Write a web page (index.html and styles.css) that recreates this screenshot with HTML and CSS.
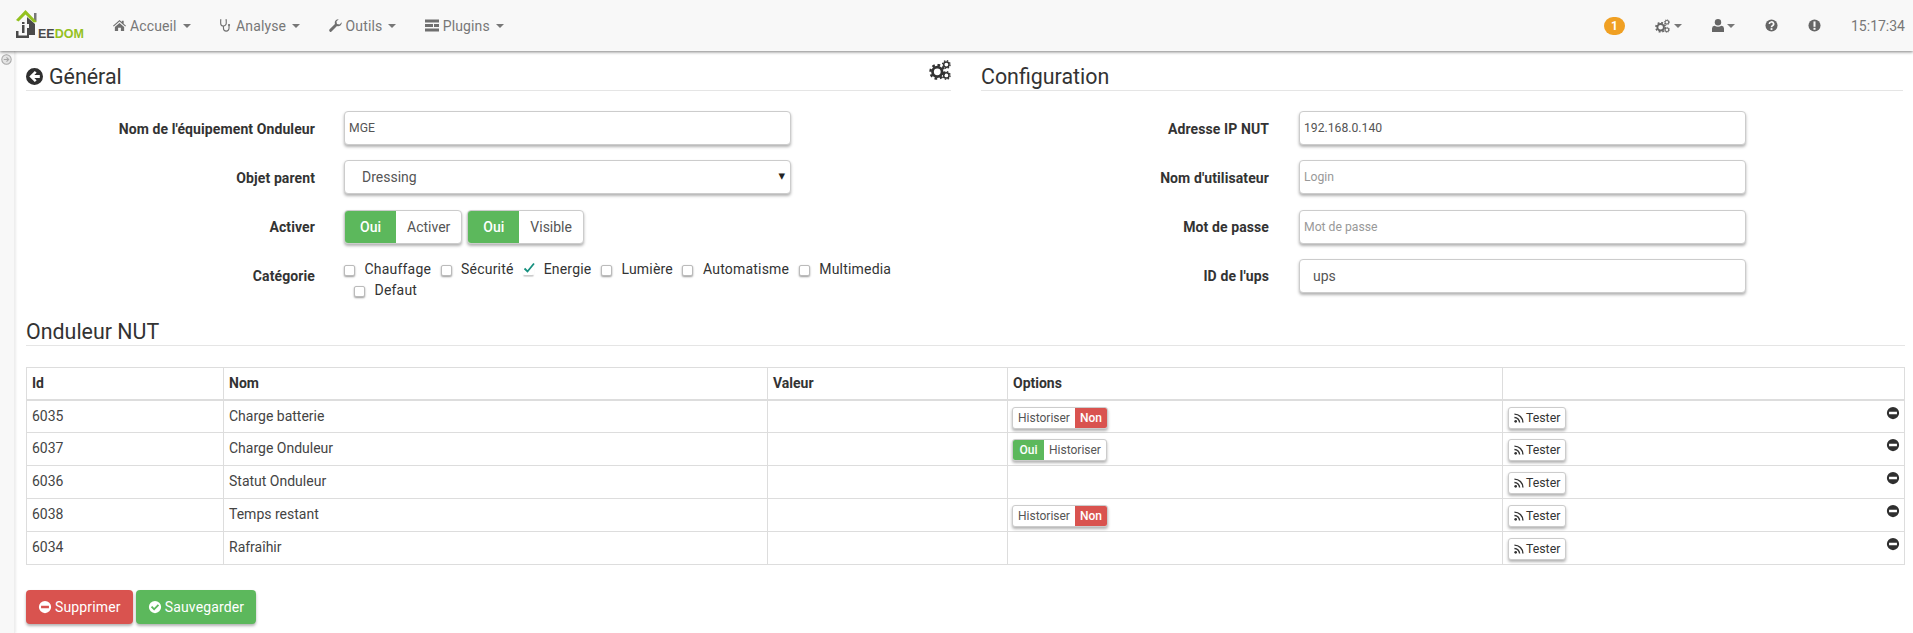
FILE: index.html
```html
<!DOCTYPE html>
<html lang="fr">
<head>
<meta charset="utf-8">
<title>Jeedom</title>
<link rel="stylesheet" href="styles.css">
</head>
<body>
<svg class="defs" width="0" height="0" aria-hidden="true">
  <defs>
    <symbol id="gear" viewBox="0 0 24 24"><circle cx="12" cy="12" r="7" fill="none" stroke="currentColor" stroke-width="4"/><circle cx="12" cy="12" r="10" fill="none" stroke="currentColor" stroke-width="3.600" stroke-dasharray="3.900 3.954"/></symbol>
    <symbol id="cogs" viewBox="0 0 24 22"><use href="#gear" x="0" y="4" width="18" height="18"/><use href="#gear" x="14" y="0" width="10" height="10"/><use href="#gear" x="14" y="12" width="10" height="10"/></symbol>
    <symbol id="minus" viewBox="0 0 16 16"><path fill="currentColor" fill-rule="evenodd" d="M8 1a7 7 0 1 0 0 14A7 7 0 0 0 8 1zM3.500 6.500h9v3h-9z"/></symbol>
    <symbol id="rss" viewBox="0 0 12 12"><circle cx="2" cy="10" r="1.600" fill="currentColor"/><path fill="none" stroke="currentColor" stroke-width="1.700" d="M.5 5.300a6.200 6.200 0 0 1 6.200 6.200M.5 1.300a10.200 10.200 0 0 1 10.200 10.200"/></symbol>
    <symbol id="caret" viewBox="0 0 8 4"><path fill="currentColor" d="M0 0h8L4 4z"/></symbol>
  </defs>
</svg>

<header class="navbar">
  <a class="brand" href="#">
    <svg class="brand-mark" viewBox="0 0 26 33" width="26" height="33" aria-hidden="true">
      <rect x="20" y="5" width="2.500" height="8" fill="#777"/>
      <path fill="#4a4a4a" d="M13 9l8 7v11h-6V16h-2zM8 14h2.500v2H8zM8 17h2.500v8H8zM2 23h2.500v4.500h8.500V20h2v10H2z"/>
      <path fill="#94c11f" d="M11.500 2L23 14l-3.500.5-8-8-7 7-2.500-1.500z"/>
    </svg>
    <span class="brand-ee">EE</span><span class="brand-dom">DOM</span>
  </a>
  <nav class="nav-main">
    <a class="nav-item" href="#">
      <svg class="ico" viewBox="0 0 14 12" aria-hidden="true"><path fill="currentColor" d="M7 0l2.500 2.200V1h2v3l2.500 2.300-.8.8L7 1.800 .8 7.100 0 6.300zM2 7.500L7 3.200l5 4.300V12H8.500V8.500h-3V12H2z"/></svg>
      Accueil <svg class="caret"><use href="#caret"/></svg></a>
    <a class="nav-item" href="#">
      <svg class="ico" viewBox="0 0 12 14" aria-hidden="true"><path fill="none" stroke="currentColor" stroke-width="1.200" d="M1.500 1H.8v3.500a3 3 0 0 0 6 0V1h-.8M3.800 7.500v2.500a3 3 0 0 0 6 0V7.500"/><circle cx="9.800" cy="6.500" r="1.200" fill="currentColor"/></svg>
      Analyse <svg class="caret"><use href="#caret"/></svg></a>
    <a class="nav-item" href="#">
      <svg class="ico" viewBox="0 0 14 14" aria-hidden="true"><path fill="currentColor" d="M13.800 3.500a4 4 0 0 1-5.200 4.100L3 13.300a1.500 1.500 0 0 1-2.300-2.200L6.400 5.400A4 4 0 0 1 10.500.2L8 2.700l.6 2.700 2.700.6z"/></svg>
      Outils <svg class="caret"><use href="#caret"/></svg></a>
    <a class="nav-item" href="#">
      <svg class="ico ico-wide" viewBox="0 0 14 12" aria-hidden="true"><path fill="currentColor" d="M0 0h14v3H0zM0 4.500h8v3H0zM9 4.500h5v3H9zM0 9h14v3H0z"/></svg>
      Plugins <svg class="caret"><use href="#caret"/></svg></a>
  </nav>
  <div class="nav-right">
    <span class="badge">1</span>
    <span class="nav-icon nav-cogs"><svg class="ico-cogs"><use href="#cogs"/></svg><svg class="caret"><use href="#caret"/></svg></span>
    <span class="nav-icon nav-user">
      <svg class="ico-user" viewBox="0 0 12 13" aria-hidden="true"><circle cx="6" cy="3.300" r="3.200" fill="currentColor"/><path fill="currentColor" d="M0 13V9.500Q0 7 2.500 6.800q3.500 2 7 0Q12 7 12 9.500V13z"/></svg>
      <svg class="caret"><use href="#caret"/></svg></span>
    <span class="nav-icon nav-help"><svg class="ico-round" viewBox="0 0 14 14" aria-hidden="true"><circle cx="7" cy="7" r="6.500" fill="currentColor"/><path fill="none" stroke="#f8f8f8" stroke-width="1.800" d="M4.700 5.400A2.300 2.100 0 1 1 8 7.200Q7 7.700 7 8.800"/><rect x="6" y="9.800" width="2" height="2" fill="#f8f8f8"/></svg></span>
    <span class="nav-icon nav-alert"><svg class="ico-round" viewBox="0 0 14 14" aria-hidden="true"><circle cx="7" cy="7" r="6.500" fill="currentColor"/><rect x="5.900" y="2.600" width="2.200" height="5.800" fill="#f8f8f8"/><rect x="5.900" y="9.500" width="2.200" height="2.100" fill="#f8f8f8"/></svg></span>
    <span class="clock">15:17:34</span>
  </div>
</header>

<div class="layout">
  <aside class="rail">
    <svg class="rail-ico" viewBox="0 0 14 14" aria-hidden="true"><circle cx="7" cy="7" r="6" fill="#e4e4e4" stroke="#a8a8a8" stroke-width="1.300"/><path fill="none" stroke="#a8a8a8" stroke-width="1.400" d="M3.500 7h6M7 4.300L9.800 7 7 9.700"/></svg>
  </aside>
  <main class="content">
    <div class="columns">
      <section class="col col-left">
        <h2 class="legend">
          <svg class="back" viewBox="0 0 16 16" aria-hidden="true"><path fill="#2f2f2f" fill-rule="evenodd" d="M8 0a8 8 0 1 0 0 16A8 8 0 0 0 8 0zM8.300 2.800l1.700 1.700-2.200 2.100h5.200v2.800H7.800L10 11.500l-1.700 1.700L3.100 8z"/></svg>
          Général
          <svg class="legend-cogs"><use href="#cogs"/></svg>
        </h2>
        <div class="form">
          <div class="row">
            <label class="lbl">Nom de l'équipement Onduleur</label>
            <input class="field field-small" type="text" value="MGE">
          </div>
          <div class="row">
            <label class="lbl">Objet parent</label>
            <div class="select">Dressing<span class="select-arrow">▾</span></div>
          </div>
          <div class="row">
            <label class="lbl">Activer</label>
            <div class="toggles">
              <span class="tg"><b class="tg-oui">Oui</b><span class="tg-txt">Activer</span></span>
              <span class="tg"><b class="tg-oui">Oui</b><span class="tg-txt">Visible</span></span>
            </div>
          </div>
          <div class="row row-cat">
            <label class="lbl">Catégorie</label>
            <div class="cats">
              <span class="cat"><i class="box"></i>Chauffage</span>
              <span class="cat"><i class="box"></i>Sécurité</span>
              <span class="cat"><i class="box box-on"><svg viewBox="0 0 12 12" aria-hidden="true"><path fill="none" stroke="#16907f" stroke-width="1.800" d="M1.500 6.500l3 3L11 1.500"/></svg></i>Energie</span>
              <span class="cat"><i class="box"></i>Lumière</span>
              <span class="cat"><i class="box"></i>Automatisme</span>
              <span class="cat"><i class="box"></i>Multimedia</span>
              <span class="cat cat-second"><i class="box"></i>Defaut</span>
            </div>
          </div>
        </div>
      </section>
      <section class="col col-right">
        <h2 class="legend">Configuration</h2>
        <div class="form">
          <div class="row">
            <label class="lbl">Adresse IP NUT</label>
            <input class="field field-small" type="text" value="192.168.0.140">
          </div>
          <div class="row">
            <label class="lbl">Nom d'utilisateur</label>
            <input class="field field-small" type="text" placeholder="Login">
          </div>
          <div class="row">
            <label class="lbl">Mot de passe</label>
            <input class="field field-small" type="text" placeholder="Mot de passe">
          </div>
          <div class="row">
            <label class="lbl">ID de l'ups</label>
            <input class="field field-ups" type="text" value="ups">
          </div>
        </div>
      </section>
    </div>

    <h2 class="legend legend-table">Onduleur NUT</h2>
    <table class="cmds">
      <colgroup><col class="c1"><col class="c2"><col class="c3"><col class="c4"><col></colgroup>
      <thead>
        <tr><th>Id</th><th>Nom</th><th>Valeur</th><th>Options</th><th></th></tr>
      </thead>
      <tbody>
        <tr><td>6035</td><td>Charge batterie</td><td></td>
          <td><span class="mini"><span class="mini-txt">Historiser</span><b class="mini-non">Non</b></span></td>
          <td class="act"><span class="test"><svg class="rss"><use href="#rss"/></svg>Tester</span><svg class="rm"><use href="#minus"/></svg></td></tr>
        <tr><td>6037</td><td>Charge Onduleur</td><td></td>
          <td><span class="mini"><b class="mini-oui">Oui</b><span class="mini-txt">Historiser</span></span></td>
          <td class="act"><span class="test"><svg class="rss"><use href="#rss"/></svg>Tester</span><svg class="rm"><use href="#minus"/></svg></td></tr>
        <tr><td>6036</td><td>Statut Onduleur</td><td></td>
          <td></td>
          <td class="act"><span class="test"><svg class="rss"><use href="#rss"/></svg>Tester</span><svg class="rm"><use href="#minus"/></svg></td></tr>
        <tr><td>6038</td><td>Temps restant</td><td></td>
          <td><span class="mini"><span class="mini-txt">Historiser</span><b class="mini-non">Non</b></span></td>
          <td class="act"><span class="test"><svg class="rss"><use href="#rss"/></svg>Tester</span><svg class="rm"><use href="#minus"/></svg></td></tr>
        <tr><td>6034</td><td>Rafraîhir</td><td></td>
          <td></td>
          <td class="act"><span class="test"><svg class="rss"><use href="#rss"/></svg>Tester</span><svg class="rm"><use href="#minus"/></svg></td></tr>
      </tbody>
    </table>

    <div class="actions">
      <button class="btn btn-red" type="button"><svg class="btn-ico" viewBox="0 0 16 16" aria-hidden="true"><path fill="#fff" fill-rule="evenodd" d="M8 1a7 7 0 1 0 0 14A7 7 0 0 0 8 1zM3.500 6.500h9v3h-9z"/></svg>Supprimer</button>
      <button class="btn btn-green" type="button"><svg class="btn-ico" viewBox="0 0 16 16" aria-hidden="true"><path fill="#fff" fill-rule="evenodd" d="M8 1a7 7 0 1 0 0 14A7 7 0 0 0 8 1zM7 12L3.300 8.300l1.500-1.500L7 9l4.200-4.200 1.500 1.500z"/></svg>Sauvegarder</button>
    </div>
  </main>
</div>
</body>
</html>
```
FILE: styles.css
```css
* { box-sizing: border-box; }
html, body { margin: 0; padding: 0; }
body {
  font-family: Roboto, "Liberation Sans", sans-serif;
  font-size: 14px;
  line-height: 20px;
  color: #333;
  background: #fff;
  height: 633px;
  overflow: hidden;
}
.defs { position: absolute; }

/* navbar */
.navbar {
  display: flex;
  align-items: center;
  height: 51px;
  background: #f8f8f8;
  box-shadow: 0 1px 3px rgba(0, 0, 0, .5);
  position: relative;
  z-index: 2;
}
.brand {
  display: flex;
  align-items: flex-end;
  align-self: flex-start;
  flex: none;
  width: 97px;
  height: 33px;
  margin-top: 8px;
  padding-left: 14px;
  font-family: "Liberation Sans", sans-serif;
  font-weight: 700;
  font-size: 12.500px;
  line-height: 15px;
  text-decoration: none;
}
.brand-mark { flex: none; margin-right: -2px; }
.brand-ee { color: #4a4a4a; margin-bottom: -1px; }
.brand-dom { color: #94c11f; margin-bottom: -1px; }
.nav-main { display: flex; margin-left: 16px; }
.nav-item {
  display: flex;
  align-items: center;
  gap: 4px;
  color: #777;
  letter-spacing: .12px;
  text-decoration: none;
  height: 50px;
  margin-right: 28.500px;
  white-space: nowrap;
}
.ico { width: 13px; height: 13px; color: #6f6f6f; flex: none; }
.ico-wide { width: 14px; }
.caret { width: 8px; height: 4px; color: #777; flex: none; margin-left: 2px; }
.nav-right {
  margin-left: auto;
  display: flex;
  align-items: center;
  color: #666;
  padding-right: 8px;
}
.badge {
  width: 21px;
  height: 18px;
  border-radius: 9px;
  background: #f0a023;
  color: #fff;
  font-size: 12px;
  font-weight: 700;
  line-height: 18px;
  text-align: center;
  margin-right: 30px;
}
.nav-icon { display: flex; align-items: center; color: #666; }
.nav-icon .caret { margin-left: 4px; }
.nav-cogs { margin-right: 30px; }
.ico-cogs { width: 15px; height: 14px; }
.nav-user { margin-right: 30px; }
.nav-user .caret { margin-left: 3px; }
.ico-user { width: 12px; height: 13px; }
.nav-help { margin-right: 30px; }
.nav-alert { margin-right: 30px; }
.ico-round { width: 13px; height: 13px; }
.clock { color: #777; }

/* layout */
.layout { display: flex; height: 582px; }
.rail {
  flex: none;
  width: 15px;
  background: #f8f8f8;
  border-right: 1px solid #eee;
  box-shadow: 1px 0 2px rgba(0, 0, 0, .08);
  padding: 3px 0 0 1px;
}
.rail-ico { display: block; width: 11px; height: 11px; }
.content { flex: 1; padding: 0 8px 0 11px; min-width: 0; }
.columns { display: flex; gap: 30px; }
.col-left { width: 925px; flex: none; }
.col-right { flex: 1; padding-right: 2px; min-width: 0; }

.legend {
  display: flex;
  align-items: center;
  gap: 6px;
  margin: 0;
  height: 40px;
  padding-top: 12px;
  font-size: 21.400px;
  font-weight: 400;
  line-height: 28px;
  color: #333;
  border-bottom: 1px solid #e5e5e5;
  position: relative;
}
.back { width: 17px; height: 17px; flex: none; }
.legend-cogs {
  position: absolute;
  right: 0;
  top: 9px;
  width: 22px;
  height: 20px;
  color: #333;
}

.form { padding-top: 20px; }
.row {
  display: flex;
  align-items: flex-start;
  height: 49.300px;
}
.lbl {
  flex: none;
  width: 289px;
  text-align: right;
  font-weight: 700;
  letter-spacing: .1px;
  padding-top: 7.500px;
  font-size: 14px;
  color: #333;
}
.col-right .lbl { width: 288px; }
.field, .select {
  display: block;
  margin-left: 29px;
  width: 447px;
  height: 34px;
  border: 1px solid #ccc;
  border-radius: 4px;
  background: #fff;
  box-shadow: 0 2px 3px rgba(0, 0, 0, .3);
  font-family: Roboto, "Liberation Sans", sans-serif;
  color: #555;
  padding: 6px 4px;
}
.col-right .field { margin-left: 30px; }
.field-small { font-size: 12.200px; }
.field-ups { font-size: 14px; padding-left: 13px; }
.field::placeholder { color: #999; opacity: 1; }
.select {
  position: relative;
  font-size: 14px;
  line-height: 20px;
  padding-left: 17px;
}
.select-arrow {
  position: absolute;
  right: 5px;
  top: 5px;
  color: #222;
  font-size: 13px;
  font-family: "DejaVu Sans", sans-serif;
}
.toggles { display: flex; gap: 5px; margin-left: 29px; }
.tg {
  display: flex;
  height: 34px;
  border: 1px solid #ccc;
  border-radius: 4px;
  box-shadow: 0 2px 3px rgba(0, 0, 0, .3);
  overflow: hidden;
  background: #fff;
  line-height: 32px;
}
.tg-oui { background: #5cb85c; color: #fff; font-weight: 500; padding: 0 15px; }
.tg-txt { color: #555; padding: 0 11px; }
.cats { margin-left: 29px; width: 590px; display: flex; flex-wrap: wrap; line-height: 20px; letter-spacing: .2px; }
.cat { display: flex; align-items: center; margin-right: 9.500px; height: 21px; }
.cat-second { margin-left: 10px; }
.box {
  position: relative;
  display: block;
  width: 11px;
  height: 11px;
  margin-top: 2px;
  border: 1px solid #bbb;
  border-radius: 2px;
  box-shadow: 0 1px 2px rgba(0, 0, 0, .4);
  margin-right: 9.500px;
  background: #fff;
}
.box-on { border-color: transparent; border-bottom-color: #ccc; box-shadow: 0 1px 1px rgba(0, 0, 0, .15); }
.box-on svg { position: absolute; left: -1px; top: -4px; width: 12px; height: 12px; }

/* table */
.legend-table { margin-top: -2px; height: 40px; }
.cmds {
  width: 100%;
  margin-top: 21px;
  border-collapse: collapse;
  table-layout: fixed;
  font-size: 14px;
}
.c1 { width: 197px; }
.c2 { width: 544px; }
.c3 { width: 240px; }
.c4 { width: 495px; }
.cmds th, .cmds td {
  border: 1px solid #ddd;
  padding: 0 5px;
  text-align: left;
  vertical-align: top;
}
.cmds th { height: 32px; padding-top: 5px; border-bottom-width: 2px; font-weight: 700; }
.cmds td { height: 33px; padding-top: 5px; color: #444; }
.act { position: relative; }
.mini {
  display: inline-flex;
  height: 22px;
  margin-top: 1px;
  margin-left: -1px;
  border: 1px solid #ccc;
  border-radius: 3px;
  overflow: hidden;
  background: #fff;
  box-shadow: 0 2px 3px rgba(0, 0, 0, .3);
  font-size: 12px;
  line-height: 20px;
}
.mini-txt { padding: 0 5px; color: #555; }
.mini-non { background: #d9534f; color: #fff; padding: 0 5px; font-weight: 500; }
.mini-oui { background: #5cb85c; color: #fff; padding: 0 6.500px; font-weight: 500; }
.test {
  display: inline-flex;
  align-items: center;
  gap: 2px;
  height: 22px;
  margin-top: 1px;
  padding: 0 5px;
  border: 1px solid #ccc;
  border-radius: 3px;
  background: #fff;
  box-shadow: 0 2px 3px rgba(0, 0, 0, .3);
  font-size: 12.300px;
  color: #333;
}
.rss { width: 10px; height: 10px; color: #333; }
.rm {
  position: absolute;
  right: 4px;
  top: 5px;
  width: 14px;
  height: 14px;
  color: #2f2f2f;
}

/* actions */
.actions { display: flex; gap: 3px; margin-top: 25px; }
.btn {
  display: flex;
  align-items: center;
  gap: 3px;
  height: 34px;
  padding: 0 11px;
  border: 1px solid transparent;
  border-radius: 4px;
  color: #fff;
  font-family: Roboto, "Liberation Sans", sans-serif;
  font-size: 14px;
  font-weight: 400;
  letter-spacing: .15px;
  box-shadow: 0 2px 3px rgba(0, 0, 0, .3);
}
.btn-red { background: #d9534f; }
.btn-green { background: #5cb85c; }
.btn-ico { width: 14px; height: 14px; }
```
